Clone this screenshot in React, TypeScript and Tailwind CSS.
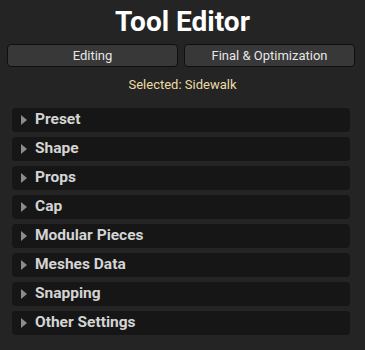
const sections = [
  "Preset",
  "Shape",
  "Props",
  "Cap",
  "Modular Pieces",
  "Meshes Data",
  "Snapping",
  "Other Settings",
];

const Caret = () => (
  <svg width="6" height="10" viewBox="0 0 6 10" className="shrink-0">
    <path d="M0 0 L6 5 L0 10 Z" fill="#8c8c8c" />
  </svg>
);

export default function App() {
  return (
    <div
      className="w-[365px] h-[350px] bg-[#242424] flex flex-col overflow-hidden"
      style={{ fontFamily: "Roboto, 'Liberation Sans', sans-serif" }}
    >
      <h1 className="text-center text-white font-bold text-[28px] leading-none mt-[8px]">
        Tool Editor
      </h1>

      <div className="flex gap-[6px] pl-[7px] pr-[10px] mt-[8px]">
        <button className="flex-1 h-[23px] rounded-[4px] bg-[#383838] border border-[#0f0f0f] text-[#e6e6e6] text-[13px] leading-none">
          Editing
        </button>
        <button className="flex-1 h-[23px] rounded-[4px] bg-[#383838] border border-[#0f0f0f] text-[#e6e6e6] text-[13px] leading-none">
          Final &amp; Optimization
        </button>
      </div>

      <div className="text-center text-[#ecdca4] text-[13px] leading-none mt-[11px]">
        Selected: Sidewalk
      </div>

      <div className="flex flex-col gap-[5px] pl-[12px] pr-[15px] mt-[17px]">
        {sections.map((s) => (
          <div
            key={s}
            className="h-[24px] rounded-[4px] bg-[#161616] flex items-center gap-[8px] pl-[9px]"
          >
            <Caret />
            <span className="text-[#d4d4d4] font-bold text-[15.5px] leading-none">
              {s}
            </span>
          </div>
        ))}
      </div>
    </div>
  );
}
